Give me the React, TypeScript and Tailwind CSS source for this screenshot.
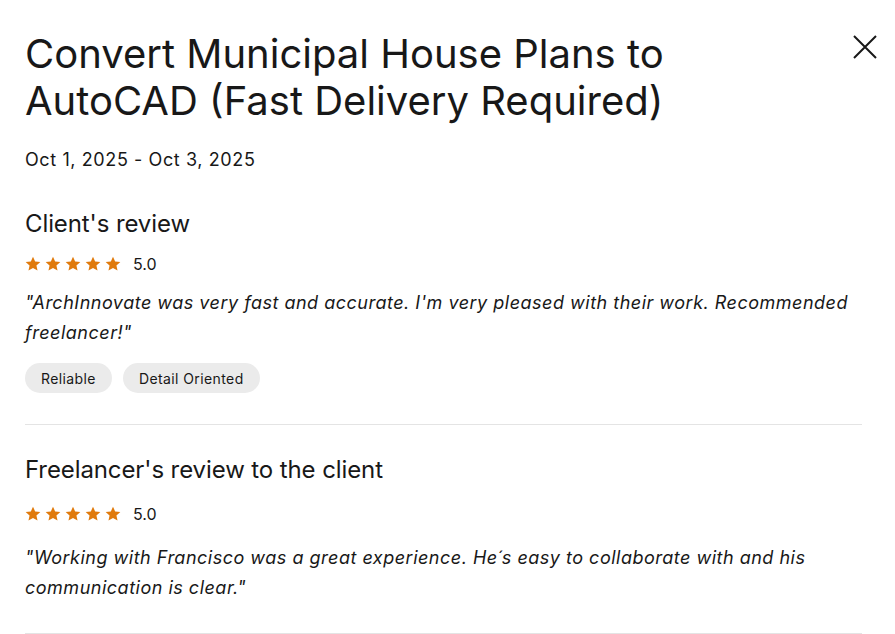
import React from "react";

const Star = () => (
  <svg width="16" height="16" viewBox="0 0 24 24" className="shrink-0">
    <path
      d="M12 1l3.2 7.1 7.8.8-5.85 5.2 1.65 7.7L12 17.9l-6.8 3.9 1.65-7.7L1 8.9l7.8-.8L12 1z"
      fill="#e07a0c"
    />
  </svg>
);

const Rating = () => (
  <div className="flex items-center h-6">
    <div className="flex items-center gap-[4px]">
      <Star />
      <Star />
      <Star />
      <Star />
      <Star />
    </div>
    <span className="ml-[12px] text-[16px] text-[#181818]">5.0</span>
  </div>
);

export default function App() {
  return (
    <div
      className="bg-white w-[895px] h-[634px] overflow-hidden text-[#181818]"
      style={{ fontFamily: 'Inter, "Liberation Sans", Arial, sans-serif' }}
    >
      <div className="pl-[25px] pr-[33px] pt-[30px]">
        <div className="flex items-start justify-between">
          <h1 className="text-[40px] leading-[47px] font-normal max-w-[700px]">
            Convert Municipal House Plans to AutoCAD (Fast Delivery Required)
          </h1>
          <button className="mt-[4px] mr-[-16px] p-0">
            <svg width="26" height="26" viewBox="0 0 26 26">
              <path d="M2 2L24 24M24 2L2 24" stroke="#181818" strokeWidth="2" fill="none" />
            </svg>
          </button>
        </div>
        <div className="mt-[24px] text-[18px] leading-[24px] tracking-[0.6px]">Oct 1, 2025 - Oct 3, 2025</div>

        <h2 className="mt-[37px] text-[24px] leading-[30px] font-normal tracking-[-0.1px]">Client's review</h2>
        <div className="mt-[13px]">
          <Rating />
        </div>
        <p className="mt-[12px] text-[18px] leading-[30px] italic tracking-[0.5px]">
          "ArchInnovate was very fast and accurate. I'm very pleased with their work. Recommended freelancer!"
        </p>
        <div className="mt-[15px] flex gap-[11px] tracking-[0.4px]">
          <span className="h-[30px] px-[16px] rounded-full bg-[#ebebeb] text-[14px] flex items-center">Reliable</span>
          <span className="h-[30px] px-[16px] rounded-full bg-[#ebebeb] text-[14px] flex items-center">Detail Oriented</span>
        </div>
        <div className="mt-[31px] h-px bg-[#e4e4e4]" />

        <h2 className="mt-[30px] text-[24px] leading-[30px] font-normal tracking-[-0.1px]">Freelancer's review to the client</h2>
        <div className="mt-[17px]">
          <Rating />
        </div>
        <p className="mt-[17px] text-[18px] leading-[30px] italic tracking-[0.5px]">
          "Working with Francisco was a great experience. He´s easy to collaborate with and his communication is clear."
        </p>
        <div className="mt-[30px] h-px bg-[#e4e4e4]" />
      </div>
    </div>
  );
}
